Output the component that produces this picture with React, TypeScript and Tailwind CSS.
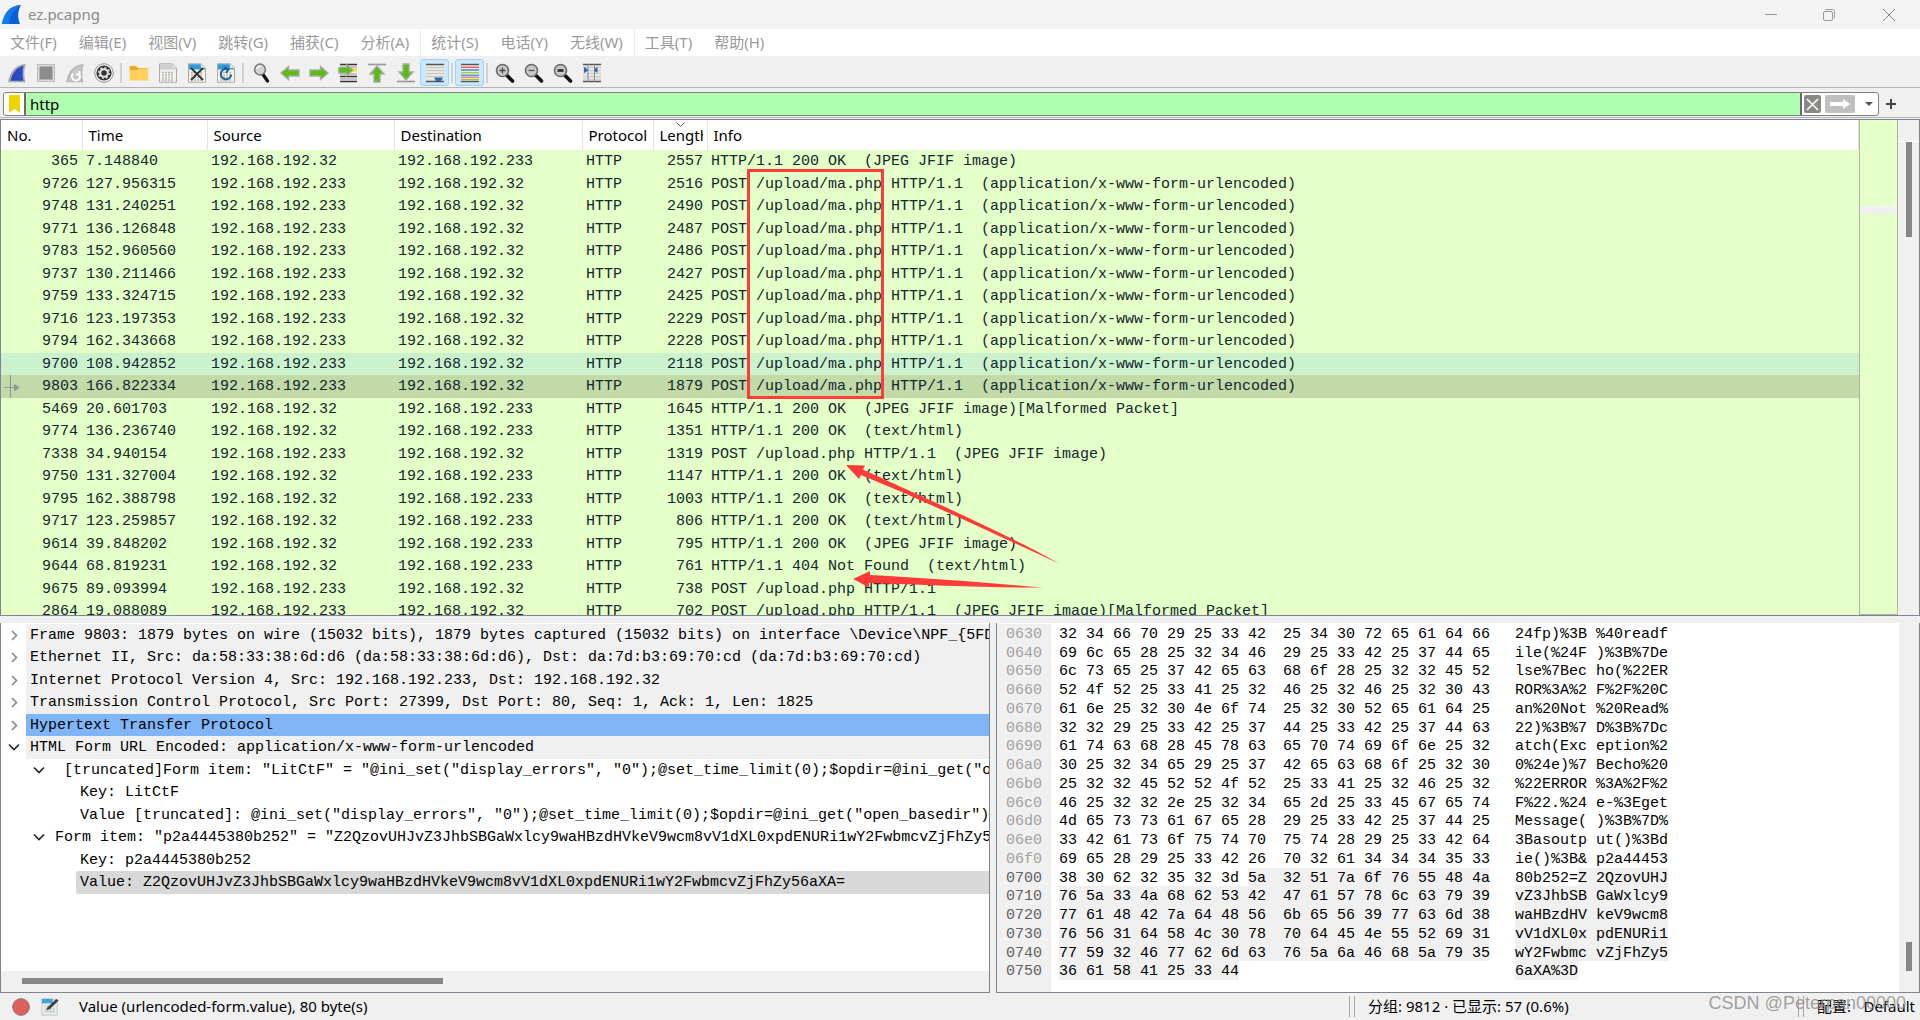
import { useState, type ReactNode } from "react";
import clsx from "clsx";

const UI = "font-['Noto_Sans','Noto_Sans_CJK_SC',sans-serif]";
const MONO = "font-['Liberation_Mono','Noto_Sans_CJK_SC',monospace]";

const MENUS = ["文件(F)", "编辑(E)", "视图(V)", "跳转(G)", "捕获(C)", "分析(A)", "统计(S)", "电话(Y)", "无线(W)", "工具(T)", "帮助(H)"];

const CLIENT = "192.168.192.233";
const SERVER = "192.168.192.32";
const SHELL = "POST /upload/ma.php HTTP/1.1  (application/x-www-form-urlencoded)";

type Packet = [no: number, time: string, request: boolean, length: number, info: string];

const PACKETS: Packet[] = [
  [365, "7.148840", false, 2557, "HTTP/1.1 200 OK  (JPEG JFIF image)"],
  [9726, "127.956315", true, 2516, SHELL],
  [9748, "131.240251", true, 2490, SHELL],
  [9771, "136.126848", true, 2487, SHELL],
  [9783, "152.960560", true, 2486, SHELL],
  [9737, "130.211466", true, 2427, SHELL],
  [9759, "133.324715", true, 2425, SHELL],
  [9716, "123.197353", true, 2229, SHELL],
  [9794, "162.343668", true, 2228, SHELL],
  [9700, "108.942852", true, 2118, SHELL],
  [9803, "166.822334", true, 1879, SHELL],
  [5469, "20.601703", false, 1645, "HTTP/1.1 200 OK  (JPEG JFIF image)[Malformed Packet]"],
  [9774, "136.236740", false, 1351, "HTTP/1.1 200 OK  (text/html)"],
  [7338, "34.940154", true, 1319, "POST /upload.php HTTP/1.1  (JPEG JFIF image)"],
  [9750, "131.327004", false, 1147, "HTTP/1.1 200 OK  (text/html)"],
  [9795, "162.388798", false, 1003, "HTTP/1.1 200 OK  (text/html)"],
  [9717, "123.259857", false, 806, "HTTP/1.1 200 OK  (text/html)"],
  [9614, "39.848202", false, 795, "HTTP/1.1 200 OK  (JPEG JFIF image)"],
  [9644, "68.819231", false, 761, "HTTP/1.1 404 Not Found  (text/html)"],
  [9675, "89.093994", true, 738, "POST /upload.php HTTP/1.1"],
  [2864, "19.088089", true, 702, "POST /upload.php HTTP/1.1  (JPEG JFIF image)[Malformed Packet]"],
];

type Node = { text: string; level: 0 | 1 | 2; open?: boolean; tone?: "bar" | "blue" | "selected" };

const TREE: Node[] = [
  { level: 0, tone: "bar", text: "Frame 9803: 1879 bytes on wire (15032 bits), 1879 bytes captured (15032 bits) on interface \\Device\\NPF_{5FD9" },
  { level: 0, tone: "bar", text: "Ethernet II, Src: da:58:33:38:6d:d6 (da:58:33:38:6d:d6), Dst: da:7d:b3:69:70:cd (da:7d:b3:69:70:cd)" },
  { level: 0, tone: "bar", text: "Internet Protocol Version 4, Src: 192.168.192.233, Dst: 192.168.192.32" },
  { level: 0, tone: "bar", text: "Transmission Control Protocol, Src Port: 27399, Dst Port: 80, Seq: 1, Ack: 1, Len: 1825" },
  { level: 0, tone: "blue", text: "Hypertext Transfer Protocol" },
  { level: 0, tone: "bar", open: true, text: "HTML Form URL Encoded: application/x-www-form-urlencoded" },
  { level: 1, open: true, text: ' [truncated]Form item: "LitCtF" = "@ini_set("display_errors", "0");@set_time_limit(0);$opdir=@ini_get("op' },
  { level: 2, text: "Key: LitCtF" },
  { level: 2, text: 'Value [truncated]: @ini_set("display_errors", "0");@set_time_limit(0);$opdir=@ini_get("open_basedir");' },
  { level: 1, open: true, text: 'Form item: "p2a4445380b252" = "Z2QzovUHJvZ3JhbSBGaWxlcy9waHBzdHVkeV9wcm8vV1dXL0xpdENURi1wY2FwbmcvZjFhZy56' },
  { level: 2, text: "Key: p2a4445380b252" },
  { level: 2, tone: "selected", text: "Value: Z2QzovUHJvZ3JhbSBGaWxlcy9waHBzdHVkeV9wcm8vV1dXL0xpdENURi1wY2FwbmcvZjFhZy56aXA=" },
];

// offset, hex 0-7, hex 8-f, ascii 0-7, ascii 8-f
const HEX: [string, string, string, string, string][] = [
  ["0630", "32 34 66 70 29 25 33 42", "25 34 30 72 65 61 64 66", "24fp)%3B", "%40readf"],
  ["0640", "69 6c 65 28 25 32 34 46", "29 25 33 42 25 37 44 65", "ile(%24F", ")%3B%7De"],
  ["0650", "6c 73 65 25 37 42 65 63", "68 6f 28 25 32 32 45 52", "lse%7Bec", "ho(%22ER"],
  ["0660", "52 4f 52 25 33 41 25 32", "46 25 32 46 25 32 30 43", "ROR%3A%2", "F%2F%20C"],
  ["0670", "61 6e 25 32 30 4e 6f 74", "25 32 30 52 65 61 64 25", "an%20Not", "%20Read%"],
  ["0680", "32 32 29 25 33 42 25 37", "44 25 33 42 25 37 44 63", "22)%3B%7", "D%3B%7Dc"],
  ["0690", "61 74 63 68 28 45 78 63", "65 70 74 69 6f 6e 25 32", "atch(Exc", "eption%2"],
  ["06a0", "30 25 32 34 65 29 25 37", "42 65 63 68 6f 25 32 30", "0%24e)%7", "Becho%20"],
  ["06b0", "25 32 32 45 52 52 4f 52", "25 33 41 25 32 46 25 32", "%22ERROR", "%3A%2F%2"],
  ["06c0", "46 25 32 32 2e 25 32 34", "65 2d 25 33 45 67 65 74", "F%22.%24", "e-%3Eget"],
  ["06d0", "4d 65 73 73 61 67 65 28", "29 25 33 42 25 37 44 25", "Message(", ")%3B%7D%"],
  ["06e0", "33 42 61 73 6f 75 74 70", "75 74 28 29 25 33 42 64", "3Basoutp", "ut()%3Bd"],
  ["06f0", "69 65 28 29 25 33 42 26", "70 32 61 34 34 34 35 33", "ie()%3B&", "p2a44453"],
  ["0700", "38 30 62 32 35 32 3d 5a", "32 51 7a 6f 76 55 48 4a", "80b252=Z", "2QzovUHJ"],
  ["0710", "76 5a 33 4a 68 62 53 42", "47 61 57 78 6c 63 79 39", "vZ3JhbSB", "GaWxlcy9"],
  ["0720", "77 61 48 42 7a 64 48 56", "6b 65 56 39 77 63 6d 38", "waHBzdHV", "keV9wcm8"],
  ["0730", "76 56 31 64 58 4c 30 78", "70 64 45 4e 55 52 69 31", "vV1dXL0x", "pdENURi1"],
  ["0740", "77 59 32 46 77 62 6d 63", "76 5a 6a 46 68 5a 79 35", "wY2Fwbmc", "vZjFhZy5"],
  ["0750", "36 61 58 41 25 33 44", "", "6aXA%3D", ""],
];
const HEX_MARK = 13;

function Svg({ children, size = 20 }: { children: ReactNode; size?: number }) {
  return (
    <svg width={size} height={size} viewBox="0 0 20 20" fill="none" aria-hidden="true">
      {children}
    </svg>
  );
}

const Fin = ({ fill, rim }: { fill: string; rim: string }) => (
  <>
    <path d="M1 19.3C3 9 8 1.5 19 1C16.5 7 17 13 18.6 19.3Z" fill={rim} />
    <path d="M3.4 17.8C5.4 10.5 9 4.5 16.6 2.8C15 8 15.4 13 16.4 17.8Z" fill={fill} />
  </>
);

const Sheet = ({ top, body = "#f4f4e8" }: { top: string; body?: string }) => (
  <>
    <path d="M1.5 .8H14L18.5 5V19.2H1.5Z" fill={body} stroke="#a9aaa4" />
    <path d="M2 1.3H13.5L18 5.5V6.5H2Z" fill={top} />
    <path d="M14 .8V5H18.5Z" fill="#f5f5f5" stroke="#bbb" strokeWidth=".6" />
    <path d="M4 9.5H16M4 12H16M4 14.5H16M4 17H16" stroke="#b5b5ae" strokeWidth="1.4" strokeDasharray="2 1" />
  </>
);

const Lens = ({ children }: { children?: ReactNode }) => (
  <>
    <path d="M11.5 12L17.5 18" stroke="#111" strokeWidth="3.6" strokeLinecap="round" />
    <circle cx="7.5" cy="7.5" r="6" fill="#c9cac7" stroke="#6a6b69" strokeWidth="1.6" />
    {children}
  </>
);

const GREEN = "#5dbb16";
const ARROW_RIM = "#a5aca0";

const ICONS: Record<string, ReactNode> = {
  start: <Fin fill="#2a4bc0" rim="#a9aaae" />,
  stop: (
    <>
      <rect x="1.5" y="1.5" width="17" height="17" fill="#d9d9d9" stroke="#bdbdbd" />
      <rect x="3.5" y="3.5" width="13" height="13" fill="#8c8c8c" />
    </>
  ),
  restart: (
    <>
      <Fin fill="#c6c6c6" rim="#b9b9b9" />
      <path d="M8.2 10.5A4 4 0 1 0 14 10.8M14.5 8V11.5H11" stroke="#fff" strokeWidth="2" />
    </>
  ),
  options: (
    <>
      <circle cx="10" cy="10" r="9.3" fill="#f4f4f4" stroke="#8f8f8f" />
      <circle cx="10" cy="10" r="7.6" fill="#333" />
      <circle cx="10" cy="10" r="3.8" stroke="#e6e6e6" strokeWidth="2" />
      <circle cx="10" cy="10" r="5.4" stroke="#e6e6e6" strokeWidth="1.4" strokeDasharray="2.1 2.1" />
    </>
  ),
  open: (
    <>
      <path d="M.8 3H7L9 5H19V10H.8Z" fill="#f0a818" />
      <path d="M.8 7H8.5L10 5.5H19.2V17.5H.8Z" fill="#ffd15c" />
    </>
  ),
  save: <Sheet top="#d0d0d0" body="#f1f1f1" />,
  close: (
    <>
      <Sheet top="#2e9bd6" />
      <path d="M4 5L16 17M16 5L4 17" stroke="#30383c" strokeWidth="2" />
    </>
  ),
  reload: (
    <>
      <Sheet top="#2e9bd6" />
      <path d="M12 6.3A5.2 5.2 0 1 0 15.2 11.5M8.5 4L12.5 6.3L10 10" stroke="#1f5c9c" strokeWidth="2" />
    </>
  ),
  find: (
    <>
      <path d="M12 11.5L16.5 18" stroke="#111" strokeWidth="3.2" strokeLinecap="round" />
      <circle cx="9" cy="6.5" r="5.4" fill="#d3d3d1" stroke="#777" strokeWidth="1.5" />
      <path d="M6 6A3 3 0 0 1 9 3.5" stroke="#fff" strokeWidth="1.4" />
    </>
  ),
  back: <path d="M1 10L8.5 3.5V7H19V13H8.5V16.5Z" fill={GREEN} stroke={ARROW_RIM} strokeWidth="1.4" />,
  forward: <path d="M19 10L11.5 3.5V7H1V13H11.5V16.5Z" fill={GREEN} stroke={ARROW_RIM} strokeWidth="1.4" />,
  goto: (
    <>
      <path d="M2 1.5H19M2 13.5H19M2 18.5H19" stroke="#333" strokeWidth="1.3" />
      <path d="M2 4H19M2 11H19M2 16H19" stroke="#999" strokeWidth="1.2" />
      <path d="M13 7H19" stroke="#ffe23a" strokeWidth="3.5" />
      <path d="M15 7L8.5 1.5V4.5H.8V10H8.5V13Z" fill={GREEN} stroke={ARROW_RIM} strokeWidth="1.2" />
    </>
  ),
  first: (
    <>
      <path d="M1 1.5H19" stroke="#999" strokeWidth="1.6" />
      <path d="M10 3L17 11H13V19H7V11H3Z" fill={GREEN} stroke={ARROW_RIM} strokeWidth="1.4" />
    </>
  ),
  last: (
    <>
      <path d="M1 18.5H19" stroke="#999" strokeWidth="1.6" />
      <path d="M10 17L17 9H13V1H7V9H3Z" fill={GREEN} stroke={ARROW_RIM} strokeWidth="1.4" />
    </>
  ),
  autoscroll: (
    <>
      <rect x="1" y="1" width="18" height="18" fill="#e6e8e2" />
      <path d="M1 1.5H19M1 18.5H19" stroke="#555" strokeWidth="1.4" />
      <path d="M1 4.5H19M1 7.5H19M1 10.5H19M1 13.5H19" stroke="#c4c5bf" />
      <path d="M9 14.5H18L15.8 18.5H11.2Z" fill="#2f66b0" />
    </>
  ),
  colorize: (
    <>
      <rect x="1" y="1" width="18" height="18" fill="#eceee8" />
      <path d="M1 1.5H19M1 18.5H19" stroke="#555" strokeWidth="1.4" />
      <path d="M1 4.3H19" stroke="#e8524a" strokeWidth="1.3" />
      <path d="M1 7H19" stroke="#3f74bf" strokeWidth="1.3" />
      <path d="M1 9.7H19" stroke="#86d63c" strokeWidth="1.3" />
      <path d="M1 12.2H19" stroke="#6884bb" strokeWidth="1.3" />
      <path d="M1 14.2H19" stroke="#9a6fa8" />
      <path d="M1 16.5H19" stroke="#d4ad25" strokeWidth="1.3" />
    </>
  ),
  zoomin: <Lens><path d="M4.5 7.5H10.5M7.5 4.5V10.5" stroke="#444" strokeWidth="1.3" /></Lens>,
  zoomout: <Lens><path d="M4.5 7.5H10.5" stroke="#555" strokeWidth="1.3" /></Lens>,
  zoom1: <Lens><path d="M4.5 7.5H10.5" stroke="#333" strokeWidth="2.8" /></Lens>,
  resize: (
    <>
      <rect x="1" y="1" width="18" height="18" fill="#e9eae5" />
      <path d="M1 4.5H19M1 7.5H19M1 10.5H19M1 13.5H19M1 16H19" stroke="#c9cac5" />
      <path d="M1 1.5H19M1 18.5H19" stroke="#555" strokeWidth="1.3" />
      <path d="M6 1V19M12.5 1V19" stroke="#888" />
      <path d="M2 4V10L5.5 8V6ZM15.5 4V10L12.5 8V6Z" fill="#2f66b0" />
    </>
  ),
};

const TOOLBAR = [
  ["start", "stop", "restart", "options"],
  ["open", "save", "close", "reload"],
  ["find", "back", "forward", "goto", "first", "last", "autoscroll"],
  ["colorize"],
  ["zoomin", "zoomout", "zoom1", "resize"],
];

function TitleBar() {
  return (
    <header className="flex h-[29px] shrink-0 items-center bg-[#f3f3f3] pl-[2px] text-[#8b8b8b]">
      <Svg>
        <path d="M0 19C2 8 8 .5 19 0C15.5 6 15.5 13 18 19Z" fill="#0d5fd4" />
        <path d="M0 19C2 8 8 .5 19 0C11 5 8 11 7 19Z" fill="#1279ee" />
      </Svg>
      <h1 className="ml-[6px] text-[15px]">ez.pcapng</h1>
      <div className="ml-auto flex">
        <button aria-label="Minimize" className="flex h-[28px] w-[58px] items-center justify-center">
          <svg width="12" height="12" aria-hidden="true"><path d="M0 5.5H12" stroke="#999" /></svg>
        </button>
        <button aria-label="Restore" className="flex h-[28px] w-[58px] items-center justify-center">
          <svg width="12" height="12" fill="none" stroke="#999" aria-hidden="true">
            <rect x=".5" y="2.5" width="9" height="9" rx="1.5" />
            <path d="M2.5 .5H9.5A2 2 0 0 1 11.5 2.5V9.5" />
          </svg>
        </button>
        <button aria-label="Close" className="flex h-[28px] w-[62px] items-center justify-center">
          <svg width="12" height="12" stroke="#888" aria-hidden="true"><path d="M0 0L12 12M12 0L0 12" /></svg>
        </button>
      </div>
    </header>
  );
}

function MenuBar() {
  return (
    <nav className="flex h-[27px] shrink-0 items-stretch bg-white pl-[9px] text-[15px] text-[#9a9a9a]">
      {MENUS.map((m, i) => (
        <button
          key={m}
          className={clsx("-ml-px mr-[12px] border-l pl-[10px] whitespace-nowrap first:pl-px", i === 6 || i === 9 ? "border-[#ececec]" : "border-transparent")}
        >
          {m}
        </button>
      ))}
    </nav>
  );
}

function FilterBar() {
  const [filter, setFilter] = useState("http");
  return (
    <div className="flex h-[30px] shrink-0 items-center border-b border-[#b4b4b4] pt-[3px] pl-[3px]">
      <div className="flex h-[24px] min-w-0 flex-1 items-stretch overflow-hidden rounded-[3px] border border-[#808080] bg-white">
        <button aria-label="Bookmarks" className="flex w-[22px] items-center justify-center border-r-2 border-[#6b6b6b]">
          <svg width="11" height="18" aria-hidden="true"><path d="M0 0H11V18L5.5 14L0 18Z" fill="#efd500" /></svg>
        </button>
        <input
          aria-label="Display filter"
          value={filter}
          onChange={(e) => setFilter(e.target.value)}
          className="min-w-0 flex-1 border-r-2 border-[#6b6b6b] bg-[#afffaf] px-1 text-[15px] leading-[22px] text-black outline-none"
        />
        <button aria-label="Clear" className="m-[2px] flex w-[17px] items-center justify-center rounded-[2px] bg-[#898a85]">
          <svg width="13" height="13" stroke="#fff" strokeWidth="1.5" aria-hidden="true"><path d="M1 1L12 12M12 1L1 12" /></svg>
        </button>
        <button aria-label="Apply" className="my-[2px] ml-[2px] flex w-[30px] items-center justify-center rounded-[2px] bg-[#bfbfbf]">
          <svg width="20" height="10" fill="#fff" aria-hidden="true"><path d="M0 3H13V0L20 5L13 10V7H0Z" /></svg>
        </button>
        <button aria-label="Filter history" className="flex w-[23px] items-center justify-center pl-[4px]">
          <svg width="8" height="4" fill="#555" aria-hidden="true"><path d="M0 0H8L4 4Z" /></svg>
        </button>
      </div>
      <button aria-label="Add filter button" className="mr-[24px] ml-[7px]">
        <svg width="10" height="10" stroke="#444" strokeWidth="2" aria-hidden="true"><path d="M5 0V10M0 5H10" /></svg>
      </button>
    </div>
  );
}

function Annotations() {
  return (
    <>
      <div className="absolute top-[49px] left-[746px] h-[230px] w-[137px] border-3 border-[#fd3b38]" />
      <svg className="absolute top-[344px] left-[844px]" width="216" height="126" viewBox="845 464 216 126" fill="#fd3b38" aria-hidden="true">
        <path d="M846 465L865 465.5L863 469.5C900 487 1000 530 1059 563.5C1000 537 930 503 861 475L859 479Z" />
        <path d="M853 579L870 571V575C930 578 990 583 1043 587.5C990 588 930 585 869 583V587.5Z" />
      </svg>
    </>
  );
}

function PacketList() {
  const th = "relative border-r border-[#e3e3e3] pr-[4px] pl-[6px] text-left font-normal";
  const td = "overflow-hidden p-0 pt-px pl-[4px] align-top whitespace-pre";
  const num = "relative p-0 pt-px pr-[4px] text-right align-top";
  return (
    <section className="flex min-h-0 flex-[496] border border-[#7f858f] bg-[#f0f0f0]">
      <div className="relative min-w-0 flex-1 overflow-hidden bg-[#e4ffc7]">
        <table className="w-full table-fixed border-collapse">
          <colgroup>
            <col className="w-[81px]" />
            <col className="w-[125px]" />
            <col className="w-[187px]" />
            <col className="w-[188px]" />
            <col className="w-[71px]" />
            <col className="w-[54px]" />
            <col />
          </colgroup>
          <thead className="bg-white text-[15px] text-black">
            <tr className="h-[30px]">
              <th className={th}>No.</th>
              <th className={th}>Time</th>
              <th className={th}>Source</th>
              <th className={th}>Destination</th>
              <th className={th}>Protocol</th>
              <th className={th}>
                <svg className="absolute top-[2px] left-[22px]" width="9" height="5" fill="none" stroke="#555" aria-hidden="true">
                  <path d="M.5 .5L4.5 4.5L8.5 .5" />
                </svg>
                <div className="overflow-hidden">Length</div>
              </th>
              <th className={th}>Info</th>
            </tr>
          </thead>
          <tbody className={clsx(MONO, "text-[15px] leading-[21px] text-[#12272e]")}>
            {PACKETS.map(([no, time, request, length, info]) => (
              <tr
                key={no}
                className={clsx("odd:h-[23px] even:h-[22px]", no === 9700 && "bg-[#cbf2cc]", no === 9803 && "bg-[#c2d9a8]")}
              >
                <td className={num}>
                  {no === 9803 && (
                    <svg className="absolute top-0 left-[3px]" width="20" height="23" stroke="#8c9a94" fill="#8c9a94" aria-hidden="true">
                      <path d="M6.5 0V23M0 12.5H11" />
                      <path d="M10.5 9.5L15 12.5L10.5 15.5Z" />
                    </svg>
                  )}
                  {no}
                </td>
                <td className={td}>{time}</td>
                <td className={td}>{request ? CLIENT : SERVER}</td>
                <td className={td}>{request ? SERVER : CLIENT}</td>
                <td className={td}>HTTP</td>
                <td className={num}>{length}</td>
                <td className={td}>{info}</td>
              </tr>
            ))}
          </tbody>
        </table>
        <Annotations />
      </div>
      <div className="flex w-[39px] flex-col border-x border-b border-[#b0b0b0] bg-[#e4ffc7]">
        <div className="mt-[86px] h-[8px] bg-[#f0f0f0]" />
      </div>
      <div className="w-[21px] pt-[21px]">
        <div className="border-t border-white" />
        <div className="ml-[8px] h-[95px] w-[6px] bg-[#868686]" />
      </div>
    </section>
  );
}

function TreeRow({ node }: { node: Node }) {
  const [open, setOpen] = useState(!!node.open);
  return (
    <li className="flex odd:h-[22px] even:h-[23px]">
      {node.level === 1 && <span className="w-[25px] shrink-0" />}
      {node.level === 2 ? (
        <span className="w-[75px] shrink-0" />
      ) : (
        <button aria-label="Toggle" onClick={() => setOpen(!open)} className="flex w-[25px] shrink-0 items-center justify-center">
          <svg width="12" height="12" fill="none" strokeWidth="1.6" stroke={open ? "#222" : "#888"} aria-hidden="true">
            <path d={open ? "M1 3.5L6 8.5L11 3.5" : "M4 2L8.500 6.500L4 11"} />
          </svg>
        </button>
      )}
      <span
        className={clsx(
          "min-w-0 flex-1 overflow-hidden pl-1 leading-[24px] whitespace-pre",
          node.tone === "bar" && "bg-[#f0f0f0]",
          node.tone === "blue" && "bg-[#80b5f8]",
          node.tone === "selected" && "rounded-l-[2px] bg-[#d8d8d8]",
        )}
      >
        {node.text}
      </span>
    </li>
  );
}

function Details() {
  return (
    <section className="flex min-w-0 flex-col overflow-hidden border border-t-0 border-[#7f858f] bg-white">
      <ul className={clsx(MONO, "min-h-0 flex-1 overflow-hidden pt-px text-[15px] text-black")}>
        {TREE.map((node) => (
          <TreeRow key={node.text} node={node} />
        ))}
      </ul>
      <div className="h-[21px] shrink-0 bg-[#f0f0f0] pt-[7px] pl-[21px]">
        <div className="h-[6px] w-[421px] bg-[#868686]" />
      </div>
    </section>
  );
}

function HexDump() {
  const mark = "bg-[#f0f0f0]";
  return (
    <section className="flex min-w-0 overflow-hidden border border-t-0 border-[#7f858f] bg-white">
      <div className={clsx(MONO, "flex min-w-0 flex-1 flex-col overflow-hidden text-[15px] leading-[21px] whitespace-pre text-black")}>
        <div className="h-px shrink-0" />
        <div>
          {HEX.map(([offset, h1, h2, a1, a2], i) => {
            const on = i > HEX_MARK;
            const short = !h2;
            return (
              <div key={offset} className="flex h-[19px] [&:nth-child(4n+2)]:h-[18px]">
                <span className={clsx("w-[54px] bg-[#f0f0f0] pl-[9px]", i < HEX_MARK ? "text-[#a0a0a0]" : "text-[#606060]")}>{offset}</span>
                <span className={clsx("ml-[8px] flex", !short && "w-[224px]", on && mark)}>
                  {i === HEX_MARK ? (
                    <>
                      {h1.slice(0, -2)}
                      <span className={clsx("flex-1", mark)}>{h1.slice(-2)}</span>
                    </>
                  ) : (
                    h1
                  )}
                </span>
                <span className={clsx("w-[206px]", i >= HEX_MARK && !short && mark, short && "ml-[44px]")}>{h2}</span>
                <span className={clsx("ml-[26px] flex", !short && "w-[81px]", on && mark)}>
                  {i === HEX_MARK ? (
                    <>
                      {a1.slice(0, -1)}
                      <span className={clsx("flex-1", mark)}>{a1.slice(-1)}</span>
                    </>
                  ) : (
                    a1
                  )}
                </span>
                <span className={clsx(i >= HEX_MARK && mark)}>{a2}</span>
              </div>
            );
          })}
        </div>
        <div className="w-[54px] flex-1 bg-[#f0f0f0]" />
      </div>
      <div className="flex w-[20px] flex-col justify-end bg-[#f0f0f0] pb-[21px]">
        <div className="ml-[7px] h-[29px] w-[6px] bg-[#868686]" />
      </div>
    </section>
  );
}

const Splitter = () => <span className="h-[21px] w-[6px] shrink-0 border-x border-[#a8a8a8]" />;

function StatusBar() {
  return (
    <footer className="relative flex h-[27px] shrink-0 items-center text-[15px] text-black">
      <div className="flex min-w-0 flex-1 items-center">
        <button aria-label="Expert information" className="ml-[12px]">
          <svg width="18" height="18" aria-hidden="true">
            <circle cx="9" cy="9" r="8.3" fill="#e0605c" stroke="#8c6a68" />
          </svg>
        </button>
        <button aria-label="Capture comment" className="ml-[11px]">
          <Svg size={18}>
            <path d="M1 1H14L18 5V19H1Z" fill="#eceeee" stroke="#bcc4c6" />
            <path d="M1 1H13V6H1Z" fill="#3fa3d8" />
            <path d="M4 9H14M4 12H15M4 15H15" stroke="#b5b9bb" strokeWidth="1.4" strokeDasharray="2 1" />
            <path d="M6 14L7 10.5L17 .8L19.5 3L9.5 12.5Z" fill="#3c4448" />
          </Svg>
        </button>
        <span className="ml-[20px]">Value (urlencoded-form.value), 80 byte(s)</span>
      </div>
      <Splitter />
      <span className="ml-[13px] w-[430px]">分组: 9812 · 已显示: 57 (0.6%)</span>
      <Splitter />
      <span className="mr-[5px] ml-[13px] flex w-[98px] justify-between whitespace-nowrap">
        <span>配置:</span>
        <span>Default</span>
      </span>
      <span className="absolute -top-px right-[14px] font-['Liberation_Sans',sans-serif] text-[18px] leading-[22px] text-[#8a8a8a]/80">
        CSDN @Peterpan00000
      </span>
    </footer>
  );
}

export default function App() {
  return (
    <div className={clsx(UI, "flex h-screen flex-col overflow-hidden bg-[#f0f0f0]")}>
      <TitleBar />
      <MenuBar />
      <div className="flex h-[32px] shrink-0 items-center border-b border-[#b4b4b4] pt-[2px] pl-[2px]">
        {TOOLBAR.map((group, i) => (
          <div key={i} className="flex items-center">
            {i > 0 && <span className="mx-[2px] h-[20px] w-[2px] bg-[#d0d0d0]" />}
            {group.map((name) => (
              <button
                key={name}
                aria-label={name}
                className={clsx(
                  "flex h-[27px] w-[29px] items-center justify-center rounded-[3px]",
                  (name === "autoscroll" || name === "colorize") && "border border-[#99d1ff] bg-[#cce8ff]",
                )}
              >
                <Svg>{ICONS[name]}</Svg>
              </button>
            ))}
          </div>
        ))}
      </div>
      <FilterBar />
      <div className="h-px shrink-0" />
      <PacketList />
      <div className="h-[7px] shrink-0" />
      <div className="grid min-h-0 flex-[371] grid-cols-[990fr_924fr] gap-[6px]">
        <Details />
        <HexDump />
      </div>
      <StatusBar />
    </div>
  );
}
